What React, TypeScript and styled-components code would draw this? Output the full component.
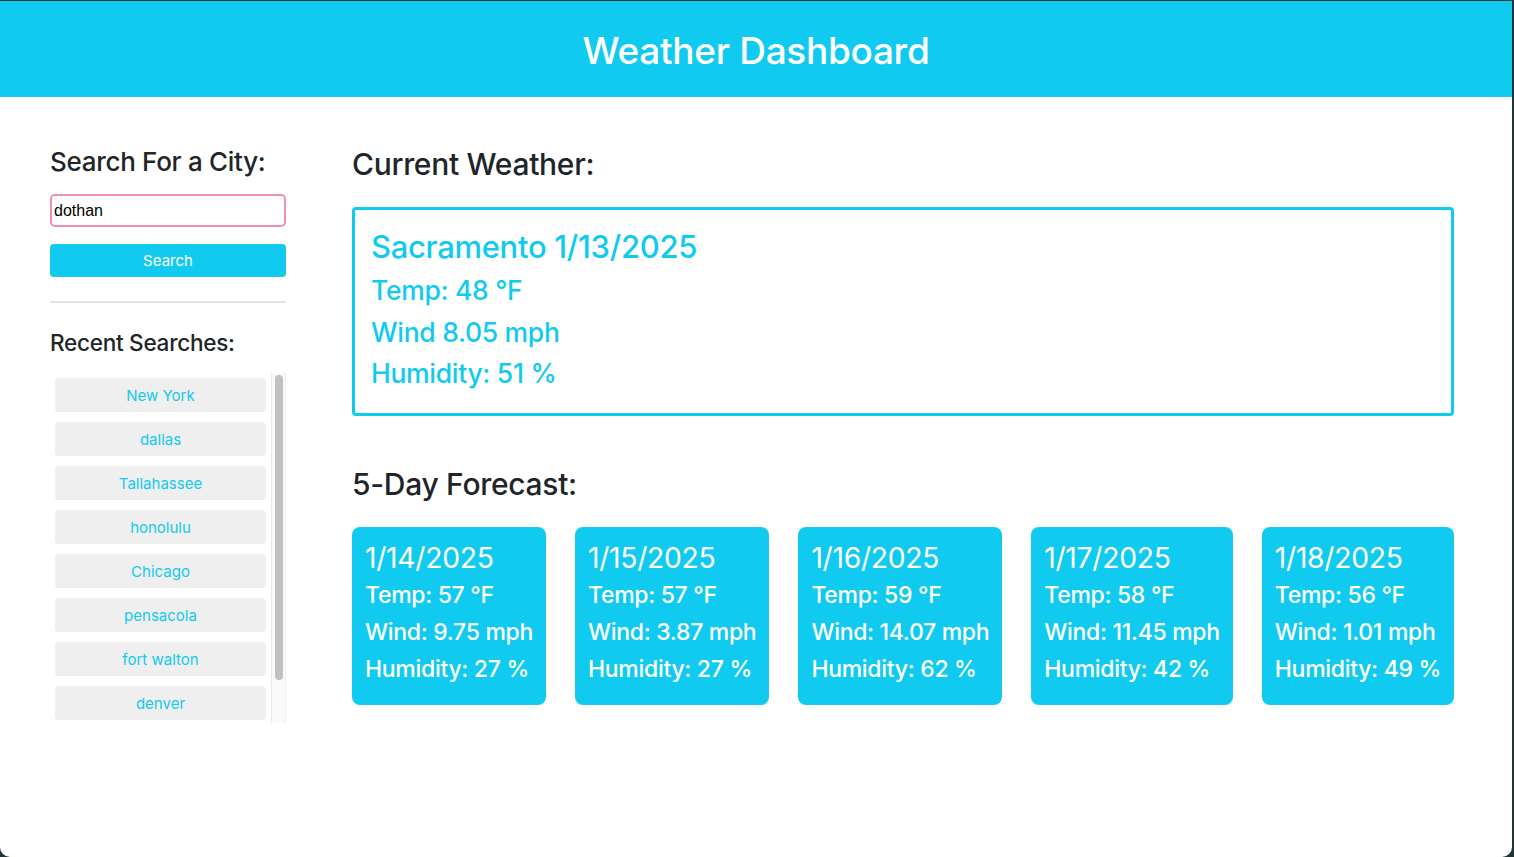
import React from "react";
import styled, { createGlobalStyle } from "styled-components";

const CYAN = "#11caef";

const Global = createGlobalStyle`
  html, body { margin: 0; padding: 0; }
  body {
    background: #1f3536;
    font-family: Inter, "Noto Sans", "Liberation Sans", sans-serif;
    color: #212529;
  }
  * { box-sizing: border-box; }
`;

const Frame = styled.div`
  margin: 1px 2px 0 0;
  min-height: 856px;
  background: #fff;
  border-radius: 0 0 10px 10px;
  overflow: hidden;
`;

const Header = styled.header`
  height: 96px;
  background: ${CYAN};
  display: flex;
  align-items: center;
  justify-content: center;
`;

const Title = styled.h1`
  margin: 0;
  color: #fff;
  font-size: 37px;
  font-weight: 500;
  letter-spacing: -0.3px;
  padding-top: 2px;
`;

const Main = styled.main`
  display: grid;
  grid-template-columns: 236px 1fr;
  column-gap: 66px;
  padding: 0 58px 0 50px;
`;

const Side = styled.aside`
  display: flex;
  flex-direction: column;
  padding-top: 48px;
`;

const SideHeading = styled.h3<{ $mt?: number; $size?: number }>`
  margin: ${(p) => p.$mt ?? 0}px 0 0;
  font-size: ${(p) => p.$size ?? 26}px;
  font-weight: 500;
  line-height: 34px;
  letter-spacing: -0.3px;
`;

const Input = styled.input`
  margin-top: 15px;
  height: 33px;
  width: 100%;
  border: 2px solid #ec8fb3;
  border-radius: 5px;
  padding: 0 2px;
  font-family: "Liberation Sans", Arial, sans-serif;
  font-size: 16px;
  color: #000;
  outline: none;
`;

const SearchButton = styled.button`
  margin-top: 17px;
  height: 33px;
  width: 100%;
  background: ${CYAN};
  color: #fff;
  border: none;
  border-radius: 4px;
  font-family: inherit;
  font-size: 15px;
`;

const Rule = styled.hr`
  margin: 24px 0 0;
  border: none;
  border-top: 2px solid #e3e3e3;
`;

const RecentBox = styled.div`
  margin-top: 13px;
  height: 350px;
  display: flex;
`;

const RecentList = styled.div`
  flex: 1;
  overflow: hidden;
  display: flex;
  flex-direction: column;
  gap: 10px;
  padding: 5px 5px 0;
`;

const ScrollTrack = styled.div`
  width: 15px;
  background: #fafafa;
  border-left: 1px solid #e8e8e8;
  border-right: 1px solid #f0f0f0;
  padding: 2px 2px 0 3px;
`;

const ScrollThumb = styled.div`
  height: 305px;
  background: #c1c1c1;
  border-radius: 5px;
`;

const RecentItem = styled.button`
  flex: 0 0 34px;
  height: 34px;
  width: 100%;
  background: #efefef;
  border: none;
  border-radius: 4px;
  color: ${CYAN};
  font-family: inherit;
  font-size: 15px;
`;

const Content = styled.section`
  display: flex;
  flex-direction: column;
  padding-top: 48px;
`;

const SectionHeading = styled.h2<{ $mt?: number }>`
  margin: ${(p) => p.$mt ?? 0}px 0 0;
  font-size: 30px;
  font-weight: 500;
  line-height: 38px;
  letter-spacing: -0.3px;
`;

const CurrentBox = styled.div`
  margin-top: 24px;
  height: 209px;
  border: 3px solid ${CYAN};
  border-radius: 4px;
  padding: 18px 16px;
  color: ${CYAN};
  display: flex;
  flex-direction: column;
`;

const CurrentTitle = styled.div`
  font-size: 31px;
  font-weight: 500;
  line-height: 38px;
  letter-spacing: -0.3px;
  margin-bottom: 4px;
`;

const CurrentLine = styled.div`
  font-size: 26.5px;
  font-weight: 500;
  line-height: 41.5px;
  letter-spacing: -0.3px;
`;

const ForecastRow = styled.div`
  margin-top: 24px;
  display: flex;
  justify-content: space-between;
`;

const Card = styled.div`
  background: ${CYAN};
  color: #fff;
  border-radius: 8px;
  padding: 12px 13px 14px;
  height: 178px;
`;

const CardDate = styled.div`
  font-size: 28.3px;
  font-weight: 400;
  line-height: 38px;
  letter-spacing: -0.3px;
`;

const CardLine = styled.div`
  font-size: 23px;
  font-weight: 500;
  line-height: 37px;
  letter-spacing: -0.3px;
`;

const recent = [
  "New York",
  "dallas",
  "Tallahassee",
  "honolulu",
  "Chicago",
  "pensacola",
  "fort walton",
  "denver",
];

const forecast = [
  { date: "1/14/2025", temp: "57", wind: "9.75", hum: "27" },
  { date: "1/15/2025", temp: "57", wind: "3.87", hum: "27" },
  { date: "1/16/2025", temp: "59", wind: "14.07", hum: "62" },
  { date: "1/17/2025", temp: "58", wind: "11.45", hum: "42" },
  { date: "1/18/2025", temp: "56", wind: "1.01", hum: "49" },
];

export default function App() {
  return (
    <>
      <Global />
      <Frame>
        <Header>
          <Title>Weather Dashboard</Title>
        </Header>
        <Main>
          <Side>
            <SideHeading>Search For a City:</SideHeading>
            <Input defaultValue="dothan" />
            <SearchButton>Search</SearchButton>
            <Rule />
            <SideHeading $mt={23} $size={22.6}>
              Recent Searches:
            </SideHeading>
            <RecentBox>
              <RecentList>
                {recent.map((c) => (
                  <RecentItem key={c}>{c}</RecentItem>
                ))}
              </RecentList>
              <ScrollTrack>
                <ScrollThumb />
              </ScrollTrack>
            </RecentBox>
          </Side>
          <Content>
            <SectionHeading>Current Weather:</SectionHeading>
            <CurrentBox>
              <CurrentTitle>Sacramento 1/13/2025</CurrentTitle>
              <CurrentLine>Temp: 48 °F</CurrentLine>
              <CurrentLine>Wind 8.05 mph</CurrentLine>
              <CurrentLine>Humidity: 51 %</CurrentLine>
            </CurrentBox>
            <SectionHeading $mt={49}>5-Day Forecast:</SectionHeading>
            <ForecastRow>
              {forecast.map((f) => (
                <Card key={f.date}>
                  <CardDate>{f.date}</CardDate>
                  <CardLine>Temp: {f.temp} °F</CardLine>
                  <CardLine>Wind: {f.wind} mph</CardLine>
                  <CardLine>Humidity: {f.hum} %</CardLine>
                </Card>
              ))}
            </ForecastRow>
          </Content>
        </Main>
      </Frame>
    </>
  );
}
